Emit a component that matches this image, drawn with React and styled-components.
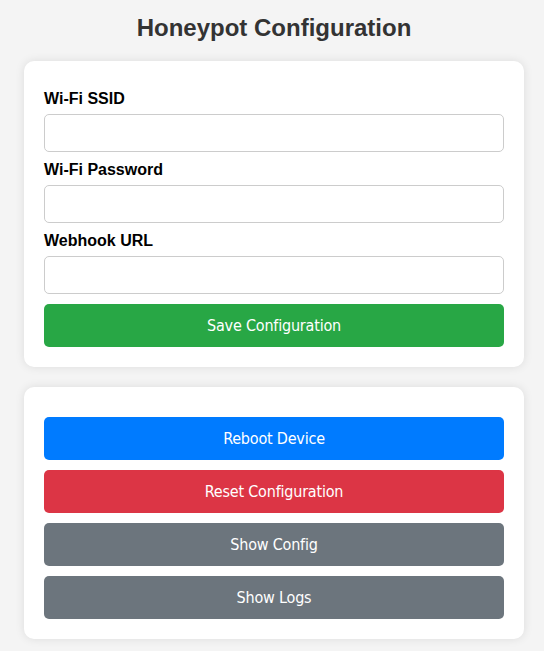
import React from "react";
import styled, { createGlobalStyle } from "styled-components";

const GlobalStyle = createGlobalStyle`
  body {
    margin: 0;
    background-color: #f4f4f4;
    font-family: "Liberation Sans", Arial, sans-serif;
  }
  * {
    box-sizing: border-box;
  }
`;

const Page = styled.div`
  width: 500px;
  margin-left: 24px;
  padding: 14px 0 12px;
  display: flex;
  flex-direction: column;
`;

const Title = styled.h2`
  margin: 0 0 20px;
  font-size: 24px;
  line-height: 27px;
  color: #333;
  text-align: center;
`;

const Card = styled.div`
  background: #fff;
  border-radius: 10px;
  box-shadow: 0 0 10px rgba(0, 0, 0, 0.1);
  padding: 20px;
  margin-bottom: 20px;
  display: flex;
  flex-direction: column;
`;

const Label = styled.label`
  display: block;
  margin-top: 9px;
  font-size: 16px;
  line-height: 18px;
  font-weight: bold;
  color: #000;
`;

const Input = styled.input`
  width: 100%;
  height: 38px;
  margin-top: 6px;
  padding: 10px;
  border: 1px solid #ccc;
  border-radius: 5px;
  font-size: 13px;
  background: #fff;
`;

const Button = styled.button`
  width: 100%;
  height: 43px;
  margin-top: 10px;
  border: none;
  border-radius: 5px;
  background-color: ${({ $color }) => $color};
  color: #fff;
  font-family: "DejaVu Sans Condensed", "DejaVu Sans", sans-serif;
  font-size: 16px;
  letter-spacing: -0.2px;
  cursor: pointer;
`;

const fields = [
  { id: "ssid", label: "Wi-Fi SSID", type: "text" },
  { id: "password", label: "Wi-Fi Password", type: "password" },
  { id: "webhook", label: "Webhook URL", type: "text" },
];

const actions = [
  { label: "Reboot Device", color: "#007bff" },
  { label: "Reset Configuration", color: "#dc3545" },
  { label: "Show Config", color: "#6c757d" },
  { label: "Show Logs", color: "#6c757d" },
];

const App = () => {
  return (
    <>
      <GlobalStyle />
      <Page>
        <Title>Honeypot Configuration</Title>
        <Card as="form" onSubmit={(e) => e.preventDefault()}>
          {fields.map((f) => (
            <React.Fragment key={f.id}>
              <Label htmlFor={f.id}>{f.label}</Label>
              <Input id={f.id} name={f.id} type={f.type} />
            </React.Fragment>
          ))}
          <Button type="submit" $color="#28a745">Save Configuration</Button>
        </Card>
        <Card>
          {actions.map((a) => (
            <Button key={a.label} $color={a.color}>{a.label}</Button>
          ))}
        </Card>
      </Page>
    </>
  );
};

export default App;
